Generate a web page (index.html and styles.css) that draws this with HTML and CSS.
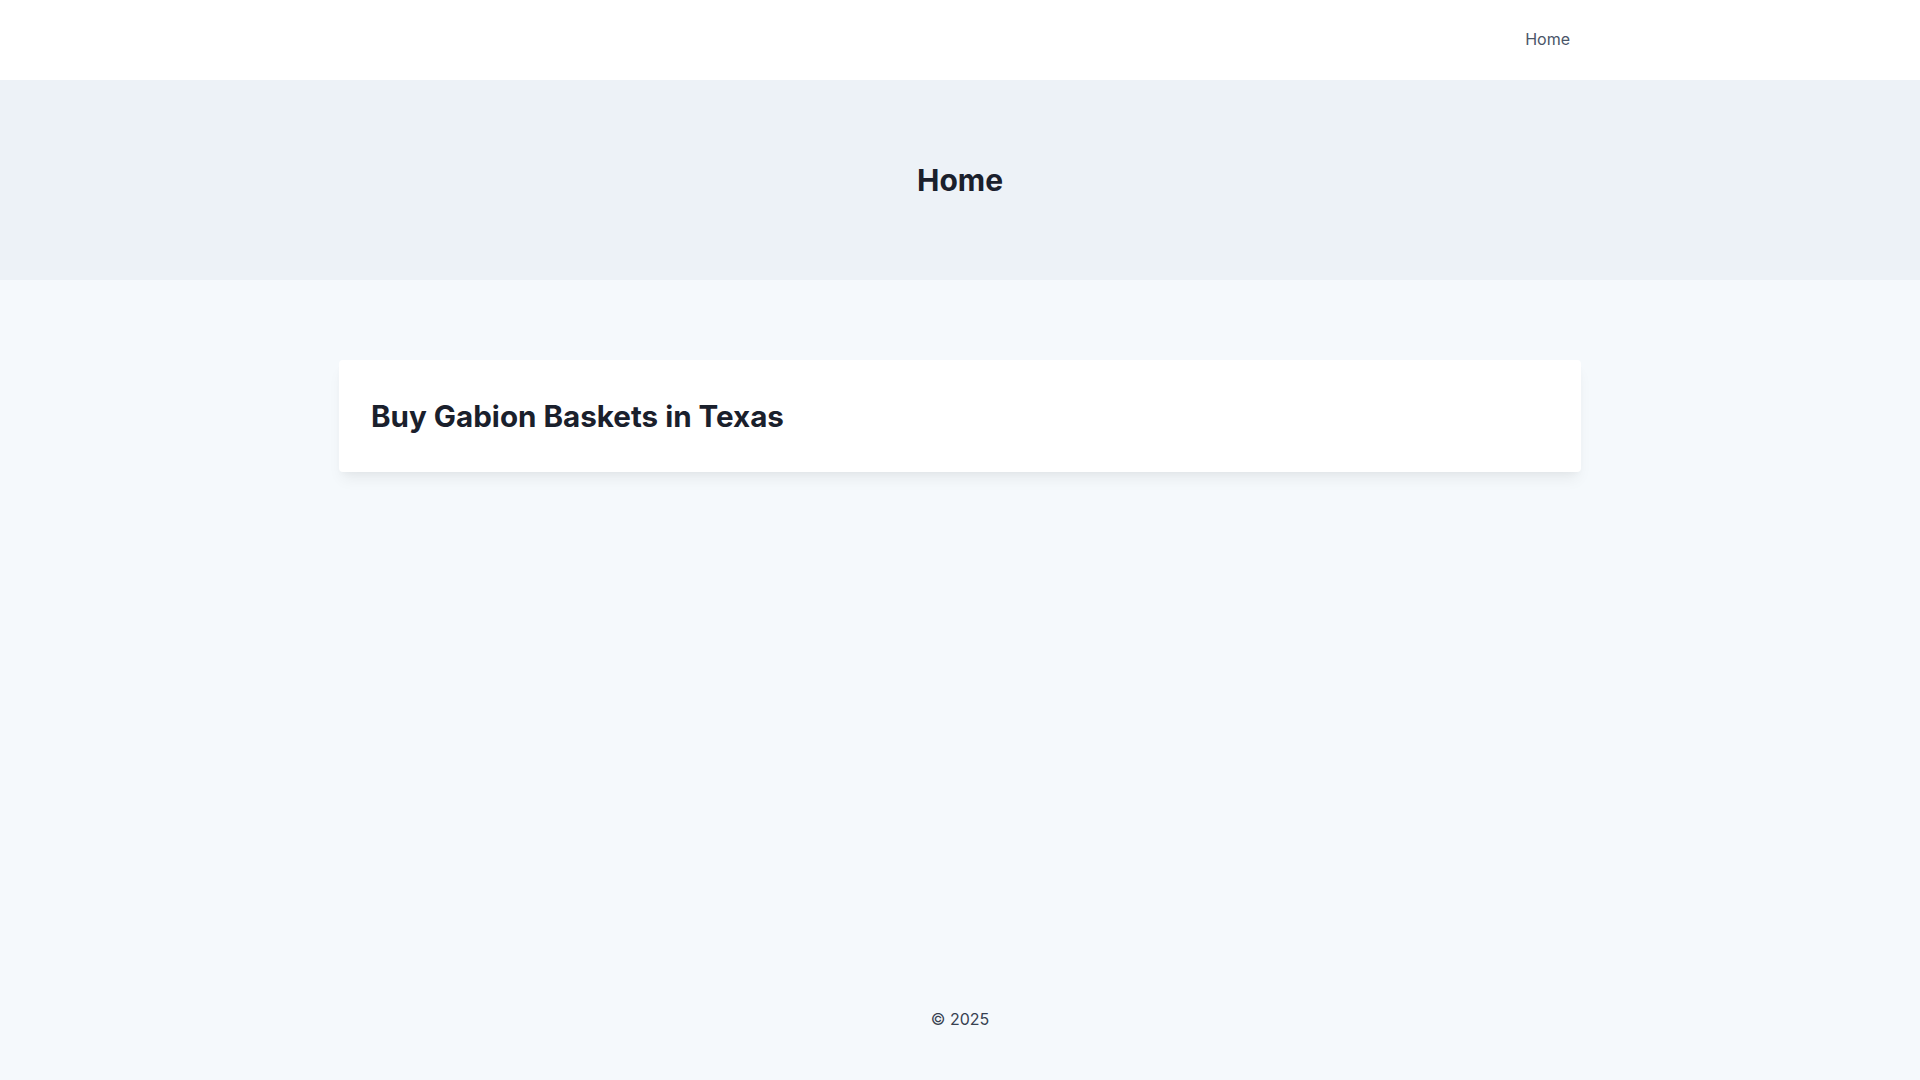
FILE: index.html
```html
<!DOCTYPE html>
<html lang="en">
<head>
<meta charset="utf-8">
<title>Home</title>
<link rel="stylesheet" href="styles.css">
</head>
<body>
<div class="page">
  <header class="site-header">
    <nav class="nav">
      <a class="nav-link" href="#">Home</a>
    </nav>
  </header>
  <section class="hero">
    <h1 class="hero-title">Home</h1>
  </section>
  <main class="main">
    <article class="card">
      <h2 class="card-title">Buy Gabion Baskets in Texas</h2>
    </article>
  </main>
  <footer class="footer">
    <p class="footer-text">© 2025</p>
  </footer>
</div>
</body>
</html>
```
FILE: styles.css
```css
* { box-sizing: border-box; }
html, body { margin: 0; padding: 0; }
body {
  font-family: Inter, Roboto, "Liberation Sans", sans-serif;
  background: #f5f9fc;
  color: #1a202c;
}
.page {
  min-height: 100vh;
  display: flex;
  flex-direction: column;
}
.site-header {
  background: #ffffff;
  height: 80px;
  display: flex;
  align-items: center;
  padding-bottom: 2px;
}
.nav {
  width: 1242px;
  margin: 0 auto;
  display: flex;
  justify-content: flex-end;
  padding-right: 11px;
}
.nav-link {
  font-size: 16px;
  color: #4a5568;
  text-decoration: none;
  line-height: 24px;
}
.hero {
  background: #edf2f7;
  height: 200px;
  display: flex;
  align-items: center;
  justify-content: center;
}
.hero-title {
  margin: 0;
  font-size: 30px;
  font-weight: 700;
  line-height: 36px;
  color: #1a202c;
}
.main {
  flex: 1;
  padding-top: 80px;
}
.card {
  width: 1242px;
  margin: 0 auto;
  background: #ffffff;
  border-radius: 4px;
  padding: 32px 32px;
  box-shadow: 0 10px 15px -3px rgba(0, 0, 0, 0.06), 0 4px 6px -2px rgba(0, 0, 0, 0.03);
}
.card-title {
  margin: 0;
  font-size: 29.6px;
  font-weight: 700;
  line-height: 48px;
  color: #1a202c;
}
.footer {
  padding: 47px 0 49px;
  text-align: center;
}
.footer-text {
  margin: 0;
  font-size: 16px;
  line-height: 24px;
  color: #374151;
}
```
